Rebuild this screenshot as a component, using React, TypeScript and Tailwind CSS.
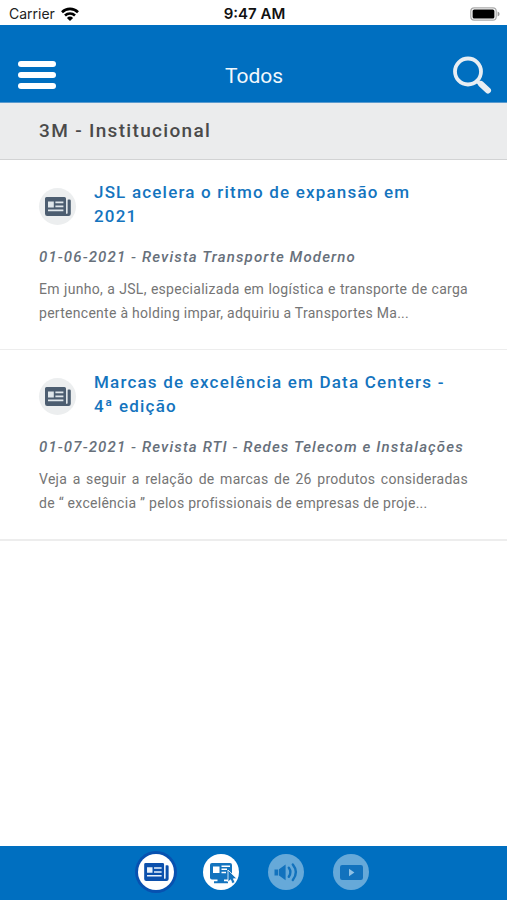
import React from "react";

type Article = { title: string; date: string; source: string; excerpt: string };

const articles: Article[] = [
  {
    title: "JSL acelera o ritmo de expansão em 2021",
    date: "01-06-2021",
    source: "Revista Transporte Moderno",
    excerpt:
      "Em junho, a JSL, especializada em logística e transporte de carga pertencente à holding impar, adquiriu a Transportes Ma...",
  },
  {
    title: "Marcas de excelência em Data Centers - 4ª edição",
    date: "01-07-2021",
    source: "Revista RTI - Redes Telecom e Instalações",
    excerpt:
      "Veja a seguir a relação de marcas de 26 produtos consideradas de “ excelência ” pelos profissionais de empresas de proje...",
  },
];

function NewspaperIcon({ className, paper }: { className: string; paper: string }) {
  return (
    <svg viewBox="0 0 26 19" className={className} aria-hidden="true">
      <path
        fill="currentColor"
        d="M1.5 0H19.5Q21 0 21 1.5V16.4H22.4V3.6Q22.4 2.5 23.5 2.5H24.5Q25.8 2.5 25.8 3.7V16.8Q25.8 19 23.5 19H2.2Q0 19 0 16.8V1.5Q0 0 1.5 0Z"
      />
      <path fill={paper} d="M3 4.6H8.8V10.4H3ZM10.4 4.6H18.4V6.2H10.4ZM10.4 8.6H18.4V10.2H10.4ZM3 12.6H18.4V14.2H3ZM21 3H22.4V16.4H21Z" />
    </svg>
  );
}

function StatusBar() {
  return (
    <div className="grid h-[25px] grid-cols-3 items-center bg-white pl-[9px] pr-[7px] pt-[2px] font-['Inter','Liberation_Sans',sans-serif] text-[14px] leading-4 text-[#222]">
      <div className="flex items-center gap-[6px]">
        <span>Carrier</span>
        <svg viewBox="0 0 18 14" className="h-[14px] w-[18px]" aria-hidden="true">
          <g fill="none" stroke="#000" strokeWidth="2.6">
            <path d="M1 5.2A11.4 11.4 0 0 1 17 5.2" />
            <path d="M4 8.5A7.2 7.2 0 0 1 14 8.5" />
          </g>
          <path d="M9 14L5.9 10.9A4.4 4.4 0 0 1 12.1 10.9Z" />
        </svg>
      </div>
      <span className="text-center text-[15px] font-semibold text-[#111]">9:47 AM</span>
      <svg viewBox="0 0 30 14" className="h-[14px] w-[30px] justify-self-end" role="img" aria-label="Bateria">
        <rect x=".8" y=".8" width="25.4" height="12.4" rx="3.4" fill="#fff" stroke="#aaa" strokeWidth="1.2" />
        <rect x="2.6" y="2.4" width="21.8" height="9.2" rx="1.6" />
        <path fill="#999" d="M27.6 4.5Q29.6 5.2 29.6 7T27.6 9.5Z" />
      </svg>
    </div>
  );
}

function ArticleRow({ article }: { article: Article }) {
  return (
    <article className="border-b border-[#ededed] px-[39px] pb-6 pt-5 last:border-b-2">
      <div className="flex items-start gap-[18px] pr-5">
        <span className="mt-2 flex size-[37px] shrink-0 items-center justify-center rounded-full bg-[#eceeef]">
          <NewspaperIcon className="h-[19px] w-[26px] text-[#4c5d70]" paper="#dfe6ea" />
        </span>
        <h2 className="text-[17px] font-medium leading-6 tracking-[0.07em] text-[#1474be]">
          <a href="#artigo">{article.title}</a>
        </h2>
      </div>
      <p className="mt-[17px] text-[15px] font-medium italic leading-6 tracking-[0.075em] text-[#67707b]">
        {article.date} - {article.source}
      </p>
      <p className="mt-2 text-justify text-[14px] leading-6 tracking-[0.02em] text-[#757575]">{article.excerpt}</p>
    </article>
  );
}

const tabClass = "flex size-[36px] items-center justify-center rounded-full";

export default function App() {
  return (
    <div className="flex min-h-screen flex-col bg-white font-['Roboto','Liberation_Sans',sans-serif]">
      <StatusBar />
      <header className="flex h-[78px] items-end justify-between border-b border-[#5a9bcf] bg-[#006fc0] pb-[7px] pl-[18px] pr-[15px]">
        <button type="button" aria-label="Menu" className="mb-[6px] flex w-[38px] flex-col gap-[5px]">
          <span className="h-[6px] w-full rounded-full bg-white" />
          <span className="h-[6px] w-full rounded-full bg-white" />
          <span className="h-[6px] w-full rounded-full bg-white" />
        </button>
        <h1 className="mb-[7px] text-[21px] leading-6 text-[#f2f8fc]">Todos</h1>
        <button type="button" aria-label="Buscar">
          <svg viewBox="0 0 40 39" className="h-[39px] w-[40px]" fill="none" stroke="#e8eef3" aria-hidden="true">
            <circle cx="16" cy="15.5" r="13" strokeWidth="3.8" />
            <path d="M25.5 25.5L28 28" strokeWidth="3.8" />
            <path d="M29 28L36 34.5" strokeWidth="6" strokeLinecap="round" />
          </svg>
        </button>
      </header>
      <div className="flex h-[57px] items-center border-b border-[#d2d3d4] bg-[#ebeced] px-[39px]">
        <h2 className="text-[19px] font-medium leading-6 tracking-[0.07em] text-[#4a4a4a]">3M - Institucional</h2>
      </div>
      <main className="flex-1">
        {articles.map((a) => (
          <ArticleRow key={a.date} article={a} />
        ))}
      </main>
      <nav className="flex h-[54px] items-center justify-center gap-[29px] bg-[#006fc0] pb-[2px]">
        <button type="button" aria-label="Impresso" className={`${tabClass} bg-white text-[#0c50ac] ring-3 ring-[#0751b0]`}>
          <NewspaperIcon className="h-[18px] w-[25px]" paper="#e9f2fb" />
        </button>
        <button type="button" aria-label="Web" className={`${tabClass} bg-white`}>
          <svg viewBox="0 0 36 36" className="size-[36px]" aria-hidden="true">
            <rect x="7" y="9" width="22" height="16.5" rx="2" fill="#1474be" />
            <path fill="#1474be" d="M14.5 25H21V27.2H25V29.2H11V27.2H14.5Z" />
            <path fill="#fff" d="M10 12.5H16.5V19H10ZM18.5 11.5H27V13H18.5ZM18.5 14.6H24V16.1H18.5ZM18.5 17.8H23V19.3H18.5Z" />
            <path fill="#1474be" stroke="#fff" strokeWidth=".8" d="M25 16V28L27.6 25.8L29.2 29.6L32 28.4L30.4 24.8H34Z" />
          </svg>
        </button>
        <button type="button" aria-label="Rádio" className={`${tabClass} bg-[#66a9d9]`}>
          <svg viewBox="0 0 36 36" className="size-[36px]" aria-hidden="true">
            <path fill="#1272bd" d="M6.5 15.4H10.2V21.4H6.5ZM11 15.2L17.6 10.5V26.2L11 21.5Z" />
            <g fill="none" stroke="#1272bd" strokeWidth="2.4" strokeLinecap="round">
              <path d="M20.8 13.8Q24 18.2 20.8 22.8" />
              <path d="M24.8 10.5Q31 18.2 24.8 26" />
            </g>
          </svg>
        </button>
        <button type="button" aria-label="Vídeo" className={`${tabClass} bg-[#66a9d9]`}>
          <svg viewBox="0 0 36 36" className="size-[36px]" aria-hidden="true">
            <rect x="7" y="11" width="23" height="15" rx="2.2" fill="#1272bd" />
            <path fill="#8fc1e5" d="M16 14.8L21.4 18.5L16 22.2Z" />
          </svg>
        </button>
      </nav>
    </div>
  );
}
